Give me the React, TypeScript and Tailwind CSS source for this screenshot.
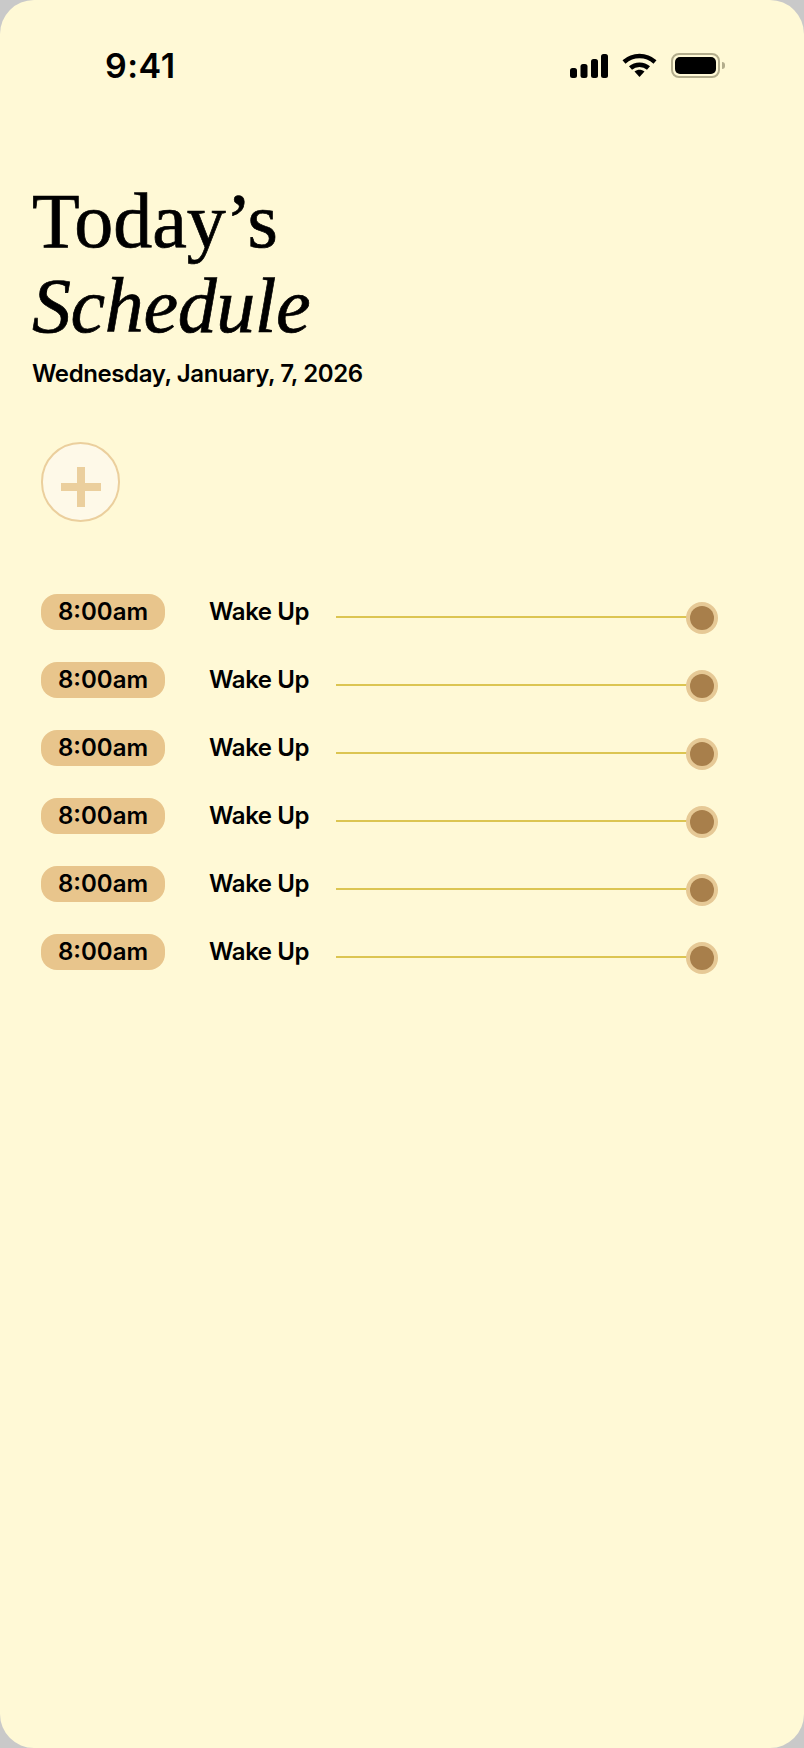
const rows = [0, 1, 2, 3, 4, 5];

function StatusIcons() {
  return (
    <div className="flex items-center">
      <svg width="38" height="24" viewBox="0 0 38 24" fill="#000">
        <rect x="0" y="14" width="7" height="10" rx="2.5" />
        <rect x="10.500" y="10" width="7" height="14" rx="2.5" />
        <rect x="21" y="5" width="7" height="19" rx="2.5" />
        <rect x="31" y="0" width="7" height="24" rx="2.5" />
      </svg>
      <svg className="ml-[14px]" width="35" height="25" viewBox="0 0 35 25" fill="none" stroke="#000" strokeWidth="4.500">
        <path d="M2 9 C11 1 24 1 33 9" />
        <path d="M8.500 15 C13.500 10.500 21.500 10.500 26.500 15" />
        <path d="M12.500 18.500 L17.500 24 L22.500 18.500 C19.500 16 15.500 16 12.500 18.500 Z" fill="#000" stroke="none" />
      </svg>
      <div className="ml-[14px] flex items-center">
        <div className="w-[49px] h-[25px] rounded-[8px] border-2 border-[#b3ad8c] p-[2px]">
          <div className="w-full h-full rounded-[5px] bg-black" />
        </div>
        <div className="ml-[2px] w-[3px] h-[7px] rounded-r-full bg-[#b3ad8c]" />
      </div>
    </div>
  );
}

function ScheduleRow() {
  return (
    <div className="flex items-center h-[68px]">
      <div className="w-[124px] h-[36px] rounded-[16px] bg-[#e8c58c] flex items-center justify-center text-[24px] font-semibold text-black">
        8:00am
      </div>
      <div className="ml-[44px] w-[127px] text-[24px] font-semibold text-black -tracking-[0.4px]">Wake Up</div>
      <div className="flex items-center mt-[9px]">
        <div className="w-[351px] h-[2px] bg-[#dcc552]" />
        <div className="-ml-[1px] mt-[2px] w-[32px] h-[32px] rounded-full bg-[#e6c996] flex items-center justify-center">
          <div className="w-[24px] h-[24px] rounded-full bg-[#a87f4b]" />
        </div>
      </div>
    </div>
  );
}

export default function App() {
  return (
    <div className="w-[804px] h-[1748px] bg-[#c9c9c9] font-['Inter',sans-serif]">
      <div className="w-full h-full rounded-[34px] bg-[#fff9d6] overflow-hidden">
        <div className="flex items-center justify-between h-[25px] mt-0 pt-[53px] box-content pl-[105px] pr-[79px]">
          <span className="text-[34px] font-semibold text-black leading-none tracking-[0.5px]">9:41</span>
          <StatusIcons />
        </div>
        <div className="pl-[32px] pt-[100px]">
          <h1 className="font-['Liberation_Serif',serif] text-[78px] leading-[85px] font-normal text-black tracking-[0px] [-webkit-text-stroke:0.7px_black]">
            Today’s
            <br />
            <em className="-tracking-[0.4px]">Schedule</em>
          </h1>
          <p className="mt-[11px] text-[24px] font-semibold text-black leading-[30px] -tracking-[0.4px]">Wednesday, January, 7, 2026</p>
        </div>
        <div className="ml-[41px] mt-[53px] w-[79px] h-[80px] rounded-full border-2 border-[#ebcf9d] bg-[#fef9e8] flex items-center justify-center">
          <svg className="mt-[10px]" width="40" height="40" viewBox="0 0 40 40" fill="#ebcf9d">
            <rect x="16" y="0" width="8" height="40" />
            <rect x="0" y="16" width="40" height="8" />
          </svg>
        </div>
        <div className="ml-[41px] mt-[56px] flex flex-col">
          {rows.map((r) => (
            <ScheduleRow key={r} />
          ))}
        </div>
      </div>
    </div>
  );
}
